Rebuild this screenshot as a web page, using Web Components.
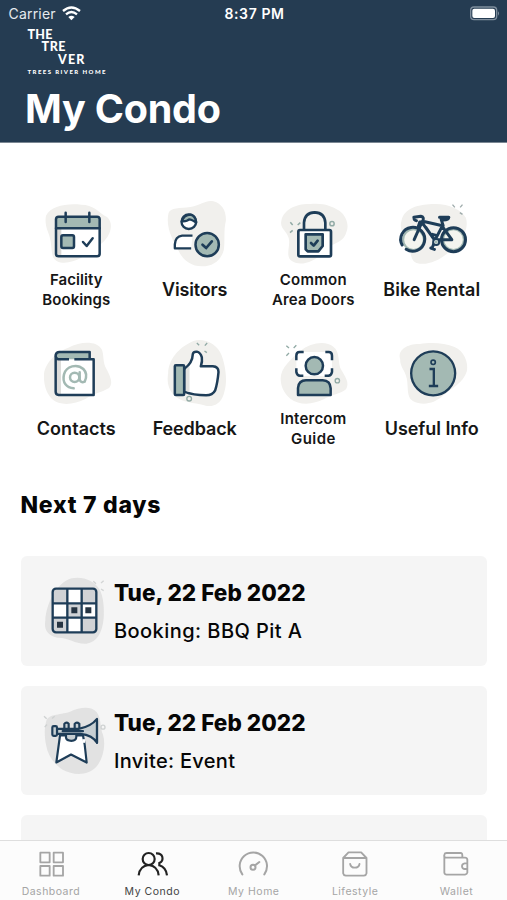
<!DOCTYPE html>
<html lang="en">
<head>
<meta charset="utf-8">
<title>My Condo</title>
<style>
html,body{margin:0;height:100%;overflow:hidden;background:#fff}
</style>
</head>
<body>
<condo-app></condo-app>
<script>
const N='#1e3d58', G='#a3b9b3', B='#f1f0ed', W='#fff';
const ICONS={
calendar:['48 24 240 207',`<path fill="${B}" d="M78 77C92 48 140 39 184 44C220 44 232 64 262 82C282 101 272 136 249 157C220 181 190 205 158 214C135 222 105 220 98 198C92 174 96 155 84 126C77 108 75 92 78 77Z"/>
<rect x="108" y="80" width="131" height="119" rx="8" fill="${W}"/><path fill="${G}" d="M108 114V86q0-6 7-6h117q7 0 7 6v28z"/><path fill="#d9d8d5" d="M111 116h13v80h-9q-4-2-4-7z"/>
<g fill="none" stroke="${N}" stroke-width="7.5" stroke-linecap="round" stroke-linejoin="round"><rect x="108" y="80" width="131" height="119" rx="8"/><path d="M108 115H239M137 68V96M208 68V96"/><rect x="124" y="136" width="38" height="38" rx="5" fill="${G}"/><path d="M189 156L200 168L218 145"/></g>`],
visitor:['43.5 24 240 207',`<path fill="${B}" d="M84 70C90 51 117 56 150 51C185 45 195 29 219 34C246 41 258 66 256 93C249 119 254 155 250 180C240 215 213 230 184 229C151 229 127 209 115 184C100 157 74 113 84 70Z"/>
<g fill="none" stroke="${N}" stroke-width="7" stroke-linejoin="round"><circle cx="145" cy="95" r="22" fill="${W}"/><path fill="${G}" d="M124 94Q130 75 150 74Q165 77 167 98Q154 88 146 88Q140 95 124 94Z"/><path d="M156 137H125Q104 140 103 163V175H152" fill="${W}"/><circle cx="200" cy="164" r="35" fill="${G}" stroke-width="7.5"/><path stroke-linecap="round" stroke-width="8" d="M186 164L197 174L214 154"/></g>`],
lock:['39 24 240 207',`<path fill="${B}" d="M64 93C70 59 108 41 150 42C191 38 212 47 238 62C258 76 269 105 259 127C250 162 210 160 191 183C173 211 125 232 97 214C73 201 93 166 86 144C80 121 59 115 64 93Z"/>
<rect x="115" y="120" width="98" height="79" rx="5" fill="${W}"/>
<g fill="none" stroke="${N}" stroke-width="8" stroke-linecap="round" stroke-linejoin="round"><path d="M132 117V98Q134 68 164 67Q194 68 196 98V117"/><rect x="115" y="120" width="98" height="79" rx="5"/><path fill="${G}" d="M137 133H188V168L175 184H143L137 178Z"/><path d="M153 159L161 167L173 152"/></g>
<g fill="none" stroke="#91aaa5" stroke-width="4.5"><path d="M91 97L98 105M113 105L121 98M90 128L98 121"/><circle cx="216" cy="101" r="6.5"/></g>`],
bike:['34.5 24 240 207',`<path fill="${B}" d="M63 92C71 55 111 44 154 42C201 39 242 57 256 83C266 113 247 148 225 168C192 203 148 230 108 219C86 209 94 181 81 162C68 136 56 115 63 92Z"/>
<g fill="none" stroke="${G}" stroke-width="6"><circle cx="99" cy="149" r="31" fill="#f4f5ef"/><circle cx="219" cy="149" r="31" fill="#f4f5ef"/></g>
<g fill="none" stroke="${N}" stroke-width="9" stroke-linecap="round" stroke-linejoin="round"><path d="M77 178A36 36 0 1 0 65 165"/><circle cx="219" cy="149" r="36"/><path d="M101 149L126 93M113 111L118 96M127 101L163 151L186 107L127 94M183 106L214 149H175M188 107L182 88M177 82H205Q204 91 185 90M100 82L121 79Q132 81 127 94L117 97M101 82Q99 91 108 92M163 153L155 174M151 174L162 178M170 137L156 133M136 112L157 143"/></g><circle cx="167" cy="156" r="9" fill="${W}" stroke="${N}" stroke-width="6"/><circle cx="167" cy="156" r="5" fill="${G}"/>
<path fill="none" stroke="#9daaaa" stroke-width="4" d="M216 44L223 52M239 52L246 44M238 68L246 73"/>`],
contacts:['48 21 240 207',`<path fill="${B}" d="M72 137C72 103 103 70 145 53C184 34 229 32 245 58C253 75 247 97 259 116C272 139 280 161 267 174C243 188 223 190 196 207C163 224 120 229 96 207C78 188 71 163 72 137Z"/>
<path fill="${W}" d="M107 88H222V195H113Q107 193 107 188Z"/><path fill="#dcdcda" d="M109 90h14v102h-10q-4-2-4-7z"/><path fill="${G}" d="M107 79Q108 67 118 66H209V88H112Z"/>
<g fill="none" stroke="${N}" stroke-width="7.5" stroke-linejoin="round"><path d="M147 88H115Q105 85 107 75Q109 66 118 66H209V85M163 88H221V195H116Q107 194 107 185V76"/></g>
<g fill="none" stroke="${G}" stroke-width="7.5" stroke-linecap="round"><circle cx="164" cy="142" r="14"/><path d="M179 127V148Q182 160 194 155Q205 132 190 117C171 100 139 108 132 133C126 158 140 174 161 175"/></g>`],
thumb:['403.5 21 240 207',`<path fill="${B}" d="M443 130C444 89 474 52 519 33C550 23 590 42 603 75C614 105 622 149 612 184C605 219 581 235 551 226C519 218 486 218 464 199C445 182 438 158 443 130Z"/>
<g fill="none" stroke="${N}" stroke-width="7.5" stroke-linejoin="round"><path fill="${W}" d="M492 116Q516 99 517 72Q519 64 529 65Q540 68 544 82Q546 94 541 109H577Q594 110 594 126Q591 160 584 181Q576 196 557 196Q518 196 492 185Z"/><path fill="#e2e2df" stroke="none" d="M495 120L507 108V186L495 183Z"/><rect x="463" y="106" width="28" height="89" rx="3" fill="${G}"/></g><g fill="none" stroke="#91aaa5" stroke-width="4"><circle cx="506" cy="206" r="7"/><path d="M529 39L536 46M553 47L560 39M552 63L559 68"/></g>`],
intercom:['39 21 240 207',`<path fill="${B}" d="M62 145C62 115 91 89 121 63C151 38 197 31 220 50C242 67 232 100 244 120C258 143 269 160 258 178C238 193 219 192 191 208C161 223 120 228 91 206C71 190 62 168 62 145Z"/>
<rect x="109" y="66" width="107" height="72" rx="14" fill="${W}"/>
<g fill="none" stroke="${N}" stroke-width="7.5" stroke-linejoin="round"><path d="M131 66H119Q109 66 109 77V91M196 66H206Q216 66 216 77V91M109 115V126Q111 137 120 137H130M216 115V126Q214 137 205 137H194"/><circle cx="163" cy="107" r="26" fill="${G}"/><path fill="${G}" d="M114 195V174Q116 151 138 151H188Q211 152 212 175V195Z"/></g><g fill="none" stroke="#91aaa5" stroke-width="4"><path d="M79 47L87 54M101 54L109 46M79 77L87 69"/><circle cx="232" cy="152" r="6.5"/></g>`],
info:['394.5 21 240 207',`<path fill="${B}" d="M419 87C410 59 442 41 478 42C510 36 553 38 582 51C610 62 625 97 619 124C609 158 572 177 545 199C522 221 485 228 457 213C437 200 444 171 439 146C434 120 418 112 419 87Z"/>
<g fill="none" stroke="${N}"><circle cx="518" cy="130" r="66" fill="${G}" stroke-width="7"/><circle cx="518" cy="97" r="6.5" stroke-width="5"/><path stroke-width="7" d="M507 117H520V168M505 168H533"/></g>`],
grid:['99 279 192 228',`<path fill="#e2e2e2" d="M106 421C108 375 137 309 185 295C218 288 251 301 267 326C281 346 283 388 281 414C277 460 260 487 229 491C195 493 178 472 142 473C112 467 101 448 106 421Z"/>
<rect x="128" y="326" width="131" height="131" rx="10" fill="${W}"/><g fill="#d0d2d5"><path d="M130 328h42v42h-42zM216 328h42v42h-42zM173 371h42v42h-42zM216 414h42v42h-42zM130 414h42v42h-42z"/></g>
<g fill="none" stroke="${N}" stroke-width="7"><rect x="128" y="326" width="131" height="131" rx="10"/><path d="M172 326V457M215 326V457M128 370H259M128 413H259"/></g><g fill="#263442"><path d="M184 382h18v18h-18zM226 382h18v18h-18zM141 425h18v18h-18z"/></g><path fill="none" stroke="#d3d5d5" stroke-width="4" d="M250 304L258 311M273 309L281 302M273 327L281 332"/>`],
trumpet:['99 82.5 192 228',`<path fill="#e2e2e2" d="M108 140C113 115 146 120 180 109C211 94 245 92 260 110C275 129 269 155 279 178C288 208 280 249 259 274C233 302 190 300 158 283C129 263 113 238 108 207C103 181 103 157 108 140Z"/>
<g fill="none" stroke="${N}" stroke-width="6.5" stroke-linejoin="round" stroke-linecap="round"><path fill="${W}" d="M150 180L139 261L183 237L230 261L224 207L219 180Z"/><path fill="#c7cfd3" d="M168 174V187Q170 196 184 196Q199 196 199 184V175M163 160V145Q169 138 176 145V160M194 160V145Q200 138 208 145V160"/><path fill="#c7cfd3" d="M141 160H206Q243 153 261 130V202Q248 179 211 175H141Z"/><rect x="127" y="152" width="14" height="29" rx="4" fill="#c7cfd3"/><path d="M158 167H219M261 137V202"/></g><path d="M221 191v11" stroke="${W}" stroke-width="8"/><g fill="none" stroke="#cfd2d2" stroke-width="4"><path d="M102 122L110 130M126 129L134 122M104 155L111 147"/><circle cx="279" cy="155" r="6"/></g>`],
dashboard:['102 132 102 90',`<g fill="none" stroke="currentColor" stroke-width="5.5" stroke-linejoin="round"><path d="M121 143h28v29h-28zM161 143h28v29h-28zM121 183h28v29h-28zM161 183h28v29h-28z"/></g>`],
people:['405 132 102 90',`<g fill="none" stroke="currentColor" stroke-width="6.5"><circle cx="446" cy="162" r="18"/><path d="M416 211Q419 183 446 180Q473 183 476 211M468 145Q484 144 487 156Q490 169 478 174V181Q498 187 501 211"/></g>`],
gauge:['708 132 102 90',`<g fill="none" stroke="currentColor" stroke-width="6" stroke-linecap="round"><path d="M727 208A41 41 0 1 1 793 208"/><circle cx="759" cy="187" r="7.5"/><path d="M765 181L778 171"/></g>`],
bag:['250.5 132 102 90',`<g fill="none" stroke="currentColor" stroke-width="5.5" stroke-linejoin="round" stroke-linecap="round"><path d="M266 159L282 142H320L336 159V205Q335 211 328 212H274Q267 211 266 205ZM267 159H335M287 177Q289 188 301 188Q313 188 315 177"/></g>`],
wallet:['555 132 102 90',`<g fill="none" stroke="currentColor" stroke-width="5.5" stroke-linejoin="round"><path d="M571 154V203Q572 209 578 209H633Q639 208 640 203V164Q639 158 633 158H575Q569 156 571 149Q572 144 578 144H621Q625 145 625 150V158M641 175H632Q624 176 624 184Q625 192 632 192H641"/></g>`]
};

class AppIcon extends HTMLElement{
  connectedCallback(){
    const [vb,art]=ICONS[this.getAttribute('name')];
    this.attachShadow({mode:'open'}).innerHTML=`<style>:host{display:block;flex:none}svg{display:block;width:100%;height:100%}</style><svg viewBox="${vb}" aria-hidden="true">${art}</svg>`;
  }
}
customElements.define('app-icon',AppIcon);

/* One line of text whose tracking is adjusted to a given width. */
class FitText extends HTMLElement{
  connectedCallback(){
    this.attachShadow({mode:'open'}).innerHTML=`<style>:host{display:block}span{display:inline-block;white-space:nowrap}</style><span></span>`;
    const s=this.shadowRoot.querySelector('span'), t=this.getAttribute('text');
    s.textContent=t;
    const ls=(+this.getAttribute('w')-s.getBoundingClientRect().width)/(t.length-1);
    s.style.letterSpacing=ls+'px';
    s.style.marginRight=-ls+'px';
  }
}
customElements.define('fit-text',FitText);

class CondoHeader extends HTMLElement{
  connectedCallback(){
    this.attachShadow({mode:'open'}).innerHTML=`<style>
:host{display:block;box-sizing:border-box;height:143px;background:#253c52;border-bottom:1px solid #7b8793;color:#fff;font-family:Inter,"Liberation Sans",sans-serif}
.status{display:grid;grid-template-columns:1fr auto 1fr;align-items:center;height:28px;padding:0 7px 0 8.500px;font-size:14px;line-height:28px}
.left{display:flex;align-items:center;gap:6px;color:#e6eaee}.time{font-weight:600}
.wifi{width:19px;height:15px;margin-top:-2px}.bat{justify-self:end;width:30px;height:15px;margin-top:-1px}
.logo{font:900 12.500px/12.3px Lato,sans-serif;padding:1px 0 0 27.500px}
.logo fit-text:nth-child(2){padding-left:14px}.logo fit-text:nth-child(3){padding-left:30.500px}
.logo .sub{font-size:6px;line-height:12px}
h1{margin:6px 0 0 25px;font-size:39.500px;line-height:51px;font-weight:700}
</style>
<div class="status"><div class="left"><fit-text text="Carrier" w="47"></fit-text><svg class="wifi" viewBox="0 0 57 45"><g fill="none" stroke="#fff" stroke-width="7"><path d="M3 15Q28 -6 54 15M12 25Q28 11 45 25"/></g><path fill="#fff" d="M19 33Q28 25 38 33L28 43Z"/></svg></div><fit-text class="time" text="8:37 PM" w="59.500"></fit-text>
<svg class="bat" viewBox="0 0 90 45"><rect x="2" y="3" width="78" height="38" rx="10" fill="none" stroke="#7f8e9d" stroke-width="4"/><rect x="7" y="8" width="68" height="28" rx="6" fill="#fff"/><path fill="#7f8e9d" d="M84 16q6 6 0 13z"/></svg></div>
<div class="logo"><fit-text text="THE" w="25"></fit-text><fit-text text="TRE" w="24"></fit-text><fit-text text="VER" w="26.500"></fit-text><fit-text class="sub" text="TREES RIVER HOME" w="78"></fit-text></div>
<h1><fit-text text="My Condo" w="196"></fit-text></h1>`;
  }
}
customElements.define('condo-header',CondoHeader);

class MenuTile extends HTMLElement{
  connectedCallback(){
    const lines=this.getAttribute('lines').split('|').map(l=>l.split(':'));
    const two=lines.length>1;
    this.attachShadow({mode:'open'}).innerHTML=`<style>
:host{display:flex;flex-direction:column;align-items:center;height:139px}
app-icon{width:80px;height:69px}
div{height:46px;display:flex;flex-direction:column;align-items:center;justify-content:center;font-weight:600;color:#161616;font-size:${two?15:18}px;line-height:${two?20.3:24}px}
</style><app-icon name="${this.getAttribute('icon')}"></app-icon><div>${lines.map(([t,w])=>`<fit-text text="${t}" w="${w}"></fit-text>`).join('')}</div>`;
  }
}
customElements.define('menu-tile',MenuTile);

class EventCard extends HTMLElement{
  connectedCallback(){
    const i=this.getAttribute('icon');
    this.attachShadow({mode:'open'}).innerHTML=`<style>
:host{display:flex;box-sizing:border-box;height:109.500px;padding:17px 0 0 22px;gap:7px;background:#f5f5f5;border-radius:6px;color:#060606}
app-icon{width:64px;height:76px}
.text{padding-top:1px}
.d{font-size:22.500px;line-height:38px;font-weight:800}.s{font-size:20px;line-height:38px;font-weight:500}
</style>${i?`<app-icon name="${i}"></app-icon><div class="text"><fit-text class="d" text="Tue, 22 Feb 2022" w="191.500"></fit-text><fit-text class="s" text="${this.getAttribute('text')}" w="${this.getAttribute('w')}"></fit-text></div>`:''}`;
  }
}
customElements.define('event-card',EventCard);

class TabItem extends HTMLElement{
  connectedCallback(){
    this.attachShadow({mode:'open'}).innerHTML=`<style>
:host{display:flex;flex-direction:column;align-items:center;color:#a5a5a5;font:400 10.500px/14px Inter,"Liberation Sans",sans-serif}
:host([active]){color:#222}:host([active]) fit-text{color:#444}
app-icon{width:34px;height:30px;margin:8px 0 6px}
</style><app-icon name="${this.getAttribute('icon')}"></app-icon><fit-text text="${this.getAttribute('label')}" w="${this.getAttribute('w')}"></fit-text>`;
  }
}
customElements.define('tab-item',TabItem);

class TabBar extends HTMLElement{
  connectedCallback(){
    this.attachShadow({mode:'open'}).innerHTML=`<style>
:host{display:grid;grid-template-columns:repeat(5,1fr);flex:none;box-sizing:border-box;height:60px;background:#fcfcfc;border-top:1px solid #dedede}
</style><slot></slot>`;
  }
}
customElements.define('tab-bar',TabBar);

class CondoApp extends HTMLElement{
  connectedCallback(){
    this.attachShadow({mode:'open'}).innerHTML=`<style>
:host{display:flex;flex-direction:column;width:507px;height:900px;overflow:hidden;font-family:Inter,"Liberation Sans",sans-serif}
condo-header{flex:none}
main{flex:1;min-height:0;overflow:hidden}
nav{display:grid;grid-template-columns:repeat(4,118.500px);padding:55px 0 0 17px}
h2{margin:14px 0 0 20.500px;font-size:23px;line-height:30px;font-weight:800;color:#060606}
section{display:flex;flex-direction:column;gap:20px;padding:36px 20px 0 21px}
</style>
<condo-header></condo-header>
<main><nav>
<menu-tile icon="calendar" lines="Facility:52.5|Bookings:68"></menu-tile>
<menu-tile icon="visitor" lines="Visitors:65.500"></menu-tile>
<menu-tile icon="lock" lines="Common:67|Area Doors:82.500"></menu-tile>
<menu-tile icon="bike" lines="Bike Rental:97"></menu-tile>
<menu-tile icon="contacts" lines="Contacts:79"></menu-tile>
<menu-tile icon="thumb" lines="Feedback:84"></menu-tile>
<menu-tile icon="intercom" lines="Intercom:66|Guide:44.500"></menu-tile>
<menu-tile icon="info" lines="Useful Info:94"></menu-tile>
</nav>
<h2><fit-text text="Next 7 days" w="140"></fit-text></h2>
<section><event-card icon="grid" text="Booking: BBQ Pit A" w="188"></event-card><event-card icon="trumpet" text="Invite: Event" w="121"></event-card><event-card></event-card></section></main>
<tab-bar><tab-item icon="dashboard" label="Dashboard" w="58"></tab-item><tab-item icon="people" label="My Condo" w="55" active></tab-item><tab-item icon="gauge" label="My Home" w="51"></tab-item><tab-item icon="bag" label="Lifestyle" w="46"></tab-item><tab-item icon="wallet" label="Wallet" w="33"></tab-item></tab-bar>`;
  }
}
customElements.define('condo-app',CondoApp);
</script>
</body>
</html>
